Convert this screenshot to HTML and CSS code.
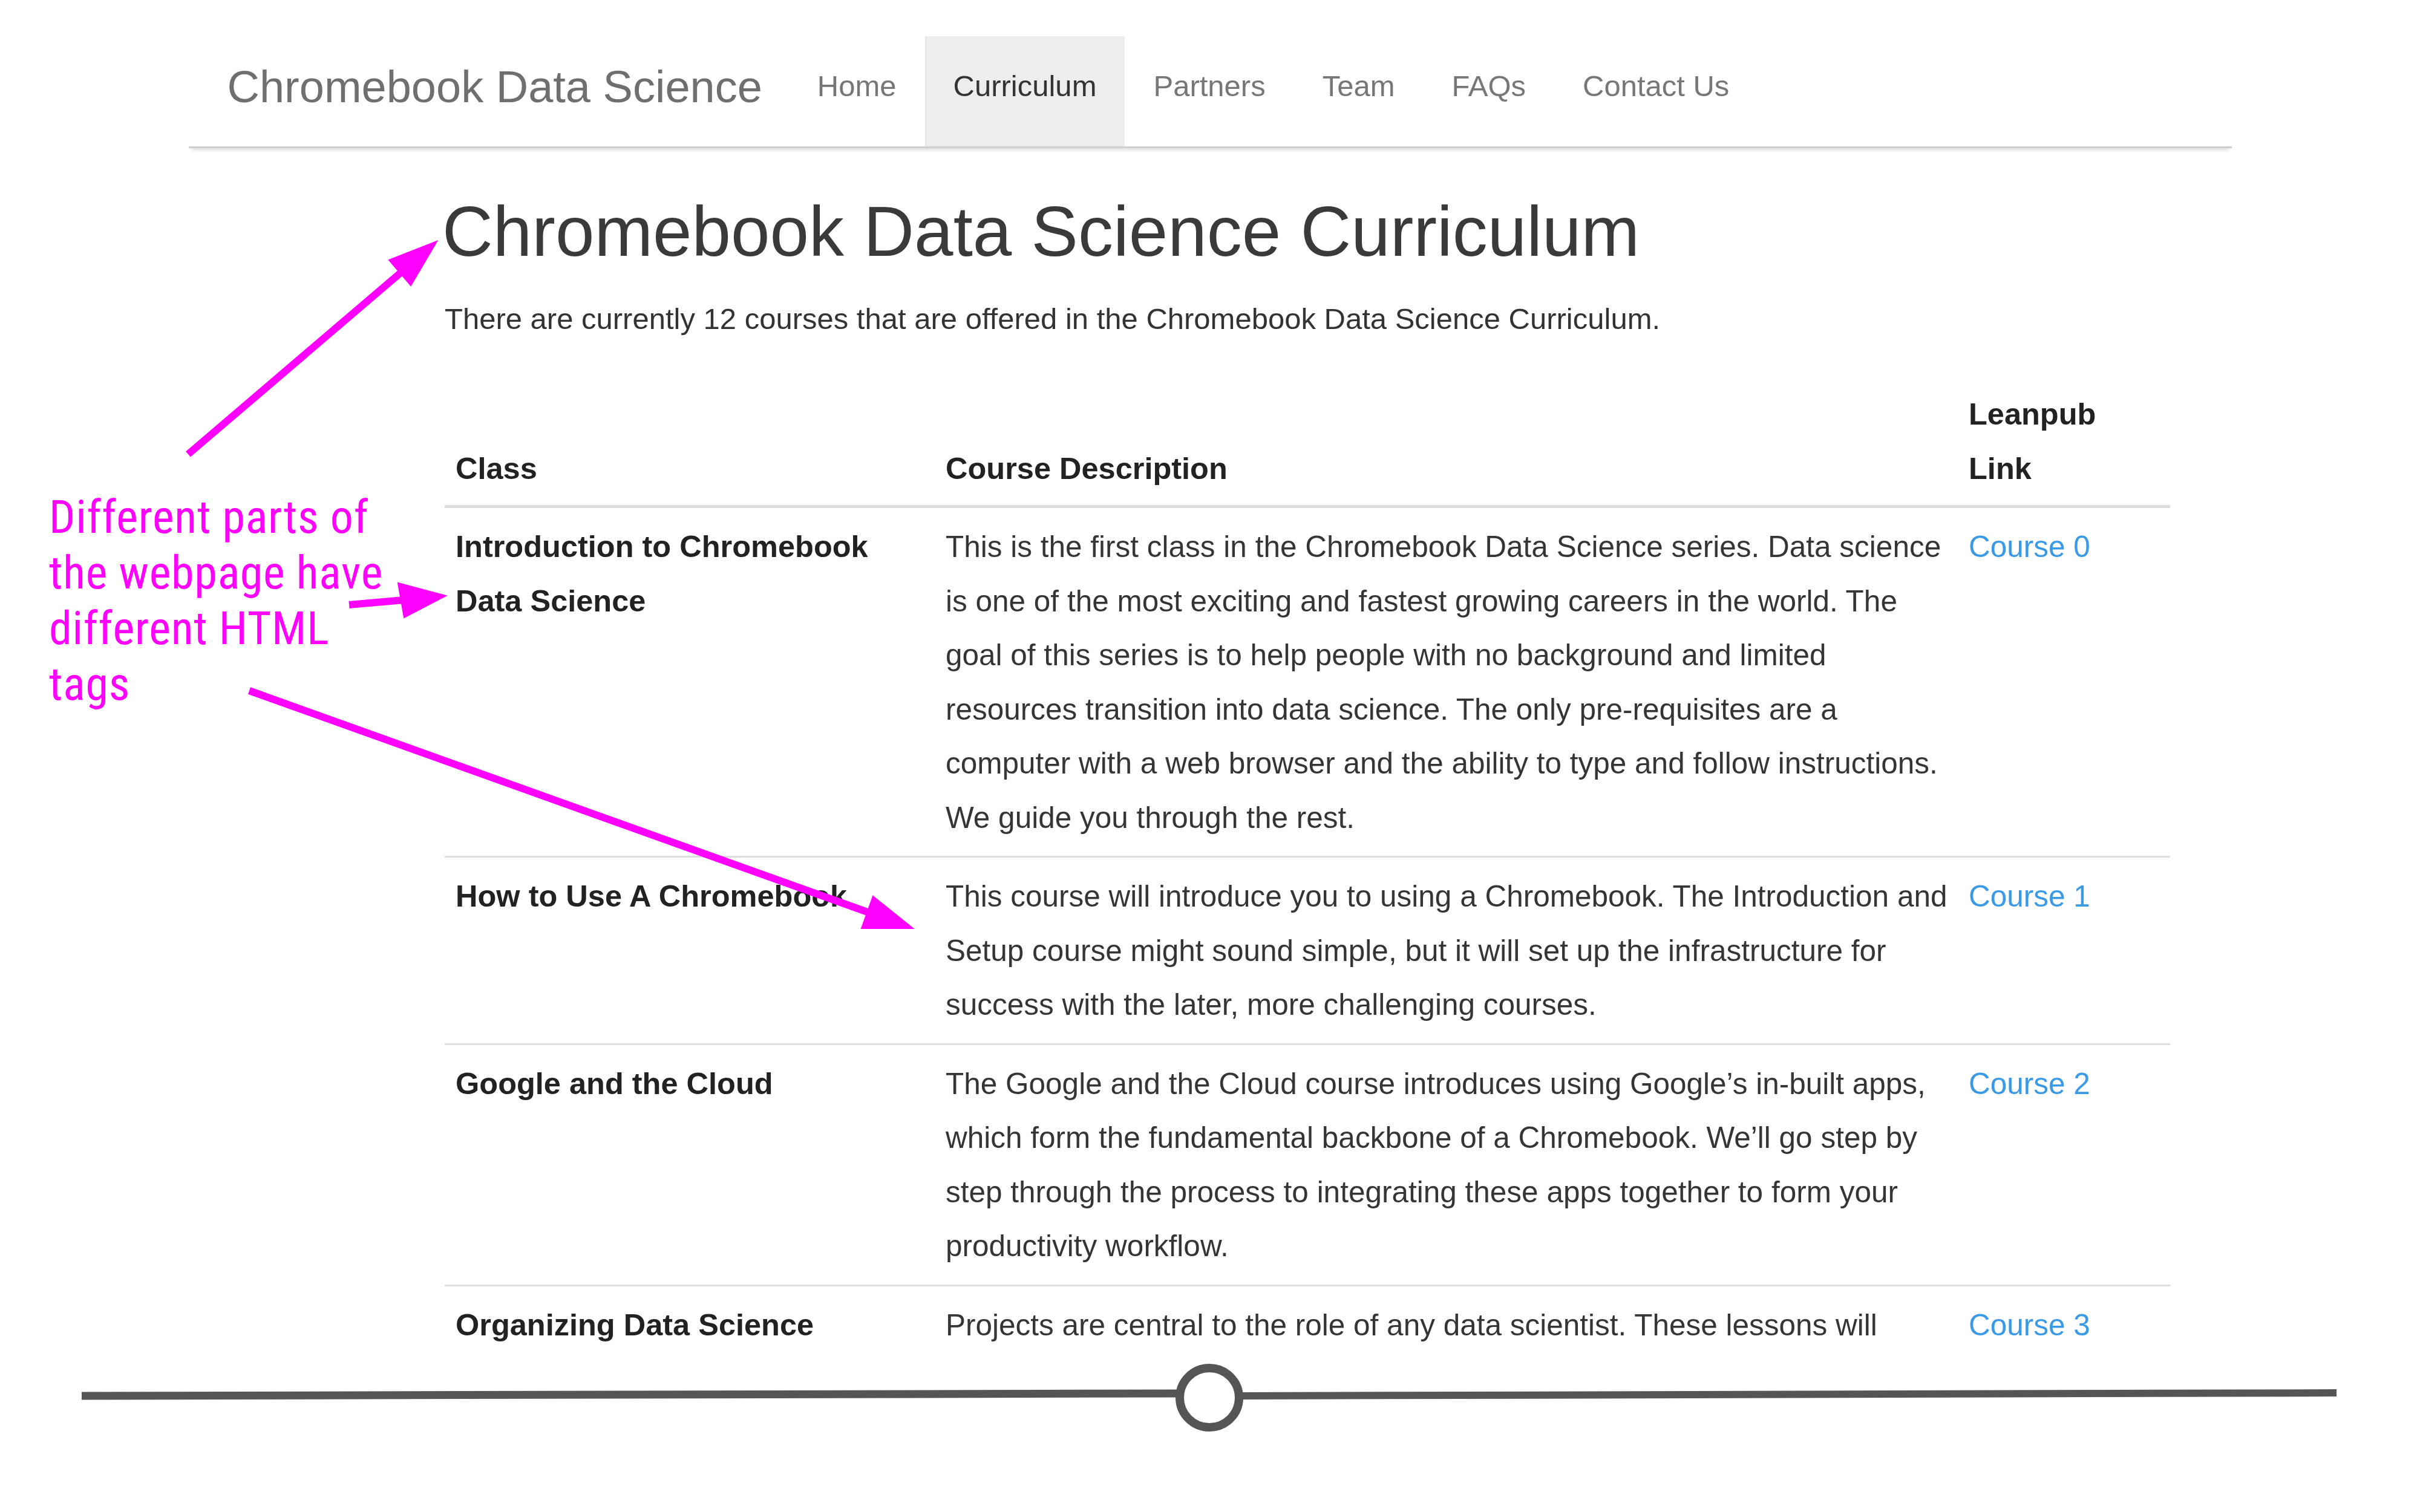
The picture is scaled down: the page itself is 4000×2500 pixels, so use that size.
FILE: index.html
```html
<!DOCTYPE html>
<html lang="en">
<head>
<meta charset="utf-8">
<title>Chromebook Data Science Curriculum</title>
<link rel="stylesheet" href="styles.css">
</head>
<body>
<div class="frame">
  <nav class="navbar">
    <a class="brand" href="#">Chromebook Data Science</a>
    <ul class="nav">
      <li><a href="#">Home</a></li>
      <li class="active"><a href="#">Curriculum</a></li>
      <li><a href="#">Partners</a></li>
      <li><a href="#">Team</a></li>
      <li><a href="#">FAQs</a></li>
      <li><a href="#">Contact Us</a></li>
    </ul>
  </nav>

  <main class="main">
    <h1 class="title">Chromebook Data Science Curriculum</h1>
    <p class="lead">There are currently 12 courses that are offered in the Chromebook Data Science Curriculum.</p>

    <table class="courses">
      <colgroup>
        <col class="c-class">
        <col class="c-desc">
        <col class="c-link">
      </colgroup>
      <thead>
        <tr>
          <th>Class</th>
          <th>Course Description</th>
          <th>Leanpub<br>Link</th>
        </tr>
      </thead>
      <tbody>
        <tr>
          <td class="name">Introduction to Chromebook<br>Data Science</td>
          <td>This is the first class in the Chromebook Data Science series. Data science<br>is one of the most exciting and fastest growing careers in the world. The<br>goal of this series is to help people with no background and limited<br>resources transition into data science. The only pre-requisites are a<br>computer with a web browser and the ability to type and follow instructions.<br>We guide you through the rest.</td>
          <td><a class="course-link" href="#">Course 0</a></td>
        </tr>
        <tr>
          <td class="name">How to Use A Chromebook</td>
          <td>This course will introduce you to using a Chromebook. The Introduction and<br>Setup course might sound simple, but it will set up the infrastructure for<br>success with the later, more challenging courses.</td>
          <td><a class="course-link" href="#">Course 1</a></td>
        </tr>
        <tr>
          <td class="name">Google and the Cloud</td>
          <td>The Google and the Cloud course introduces using Google’s in-built apps,<br>which form the fundamental backbone of a Chromebook. We’ll go step by<br>step through the process to integrating these apps together to form your<br>productivity workflow.</td>
          <td><a class="course-link" href="#">Course 2</a></td>
        </tr>
        <tr>
          <td class="name">Organizing Data Science</td>
          <td>Projects are central to the role of any data scientist. These lessons will</td>
          <td><a class="course-link" href="#">Course 3</a></td>
        </tr>
      </tbody>
    </table>
  </main>

  <svg class="arrows" width="4000" height="2240" viewBox="0 0 4000 2240" aria-hidden="true">
    <g stroke="#ff00ff" stroke-width="12" fill="#ff00ff">
      <line x1="311" y1="751" x2="668" y2="446"/>
      <polygon points="643,430 722,399 679,472" stroke-width="2"/>
      <line x1="577" y1="1000" x2="668" y2="992"/>
      <polygon points="658,964 737,985 668,1021" stroke-width="2"/>
      <line x1="412" y1="1142" x2="1445" y2="1512"/>
      <polygon points="1443,1482 1509,1535 1424,1535" stroke-width="2"/>
    </g>
  </svg>

  <div class="note">Different parts of<br>the webpage have<br>different HTML<br>tags</div>
</div>

<svg class="scrubber" width="4000" height="260" viewBox="0 0 4000 260" aria-hidden="true">
  <g stroke="#555555" fill="none">
    <line x1="135" y1="68" x2="1946" y2="64" stroke-width="13"/>
    <line x1="2052" y1="68" x2="3862" y2="63" stroke-width="12"/>
    <circle cx="1999" cy="71" r="49" stroke-width="14"/>
  </g>
</svg>
</body>
</html>
```

FILE: styles.css
```css
* {
  box-sizing: border-box;
}

html, body {
  margin: 0;
  padding: 0;
  background: #ffffff;
}

body {
  width: 4000px;
  font-family: "Liberation Sans", Arial, sans-serif;
  color: #333333;
}

a {
  text-decoration: none;
}

.frame {
  position: relative;
  height: 2240px;
  overflow: hidden;
  padding-top: 60px;
}

/* ---------- navbar ---------- */
.navbar {
  width: 3377px;
  margin: 0 auto;
  height: 185px;
  display: flex;
  align-items: stretch;
  border-bottom: 3px solid #d0d0d0;
  box-shadow: 0 7px 6px -4px rgba(0, 0, 0, 0.14);
}

.brand {
  display: block;
  padding: 47px 44px 0 64px;
  font-size: 74px;
  line-height: 74px;
  color: #6f6f6f;
  white-space: nowrap;
}

.nav {
  display: flex;
  align-items: stretch;
  list-style: none;
  margin: 0;
  padding: 0;
}

.nav li {
  display: flex;
}

.nav li a {
  display: block;
  padding: 58px 47px 0;
  font-size: 49px;
  line-height: 49px;
  color: #777777;
  white-space: nowrap;
}

.nav li.active {
  background: #ededed;
  box-shadow: inset 2px 0 3px rgba(0, 0, 0, 0.04);
}

.nav li.active a {
  color: #333333;
}

/* ---------- main ---------- */
.main {
  margin-left: 735px;
  width: 2852px;
}

.title {
  margin: 74px 0 0 -4px;
  font-size: 116px;
  line-height: 128px;
  font-weight: normal;
  color: #3a3a3a;
  white-space: nowrap;
}

.lead {
  margin: 35px 0 0;
  font-size: 49px;
  line-height: 90px;
  color: #333333;
}

.courses {
  margin-top: 54px;
  width: 2852px;
  border-collapse: collapse;
  table-layout: fixed;
  font-size: 49.5px;
  line-height: 89.5px;
}

.c-class { width: 810px; }
.c-desc { width: 1691px; }
.c-link { width: 351px; }

.courses th {
  text-align: left;
  vertical-align: bottom;
  font-weight: bold;
  font-size: 50.5px;
  color: #222222;
  padding: 14px 18px 15px;
  border-bottom: 5px solid #dddddd;
  line-height: 90px;
  white-space: nowrap;
}

.courses td {
  vertical-align: top;
  padding: 19px 18px 19px;
  border-top: 3px solid #dddddd;
  color: #353535;
  white-space: nowrap;
}

.courses tbody tr:first-child td {
  border-top: none;
}

.courses td.name {
  font-weight: bold;
  font-size: 50.5px;
  color: #222222;
}

.course-link {
  color: #3b9ae6;
}

/* ---------- annotations ---------- */
.arrows {
  position: absolute;
  left: 0;
  top: 0;
  pointer-events: none;
}

.note {
  position: absolute;
  left: 81px;
  top: 809px;
  font-family: "Roboto Condensed", Roboto, sans-serif;
  font-stretch: 87.5%;
  font-size: 76px;
  letter-spacing: 0.8px;
  line-height: 92px;
  color: #ff00ff;
  white-space: nowrap;
}

/* ---------- scrubber ---------- */
.scrubber {
  display: block;
}
```
